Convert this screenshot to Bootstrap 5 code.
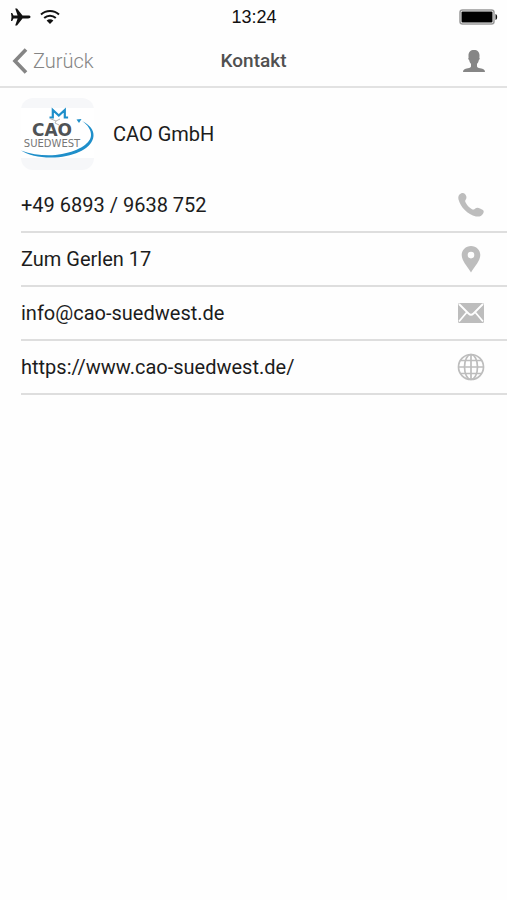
<!DOCTYPE html>
<html lang="de">
<head>
<meta charset="utf-8">
<meta name="viewport" content="width=device-width, initial-scale=1">
<title>Kontakt</title>
<link href="https://cdn.jsdelivr.net/npm/bootstrap@5.3.0/dist/css/bootstrap.min.css" rel="stylesheet">
<style>
body { background: #fefefe; color: #1c1c1c; font-family: Roboto, "Liberation Sans", sans-serif; font-size: 20px; line-height: 24px; }
svg { display: block; flex: none; }
.status-bar { height: 34px; padding: 0 9px 0 10px; color: #111; font-family: "Liberation Sans", sans-serif; font-size: 18px; }
.title-bar { height: 54px; padding: 2px 12px 0; border-bottom: 2px solid #e2e2e2; }
.side { flex: 1 1 0; }
.back { color: #858585; font-weight: 300; gap: 5px; }
.title-bar h1 { font-size: 19px; font-weight: 500; color: #505050; }
.person { color: #868686; margin-right: 9px; }
.company { padding: 10px 21px 9px; gap: 19px; }
.contacts { padding-left: 21px; }
.contacts a { height: 54px; padding-right: 22px; border-bottom: 2px solid #dedede; color: #1c1c1c; }
.contacts svg { color: #bdbdbd; }
</style>
<script src="https://cdn.jsdelivr.net/npm/bootstrap@5.3.0/dist/js/bootstrap.bundle.min.js" defer></script>
</head>
<body>
<div class="status-bar d-flex align-items-center">
  <div class="side d-flex align-items-center gap-2">
    <svg width="22" height="20" viewBox="0 0 22 20" fill="currentColor" aria-hidden="true"><path d="M20.500 10c0-.9-.9-1.400-2.500-1.400h-5.500L7 1.500H5.200l2.400 7.100H3.500L2.200 6H1l.5 4-.5 4h1.200l1.300-2.600h4.100l-2.400 7.100H7l5.500-7.100H18c1.600 0 2.500-.5 2.500-1.400z"/></svg>
    <svg width="20" height="16" viewBox="0 0 20 16" fill="none" stroke="currentColor" stroke-width="2" aria-hidden="true"><path d="M1 5.500C6 .8 14 .8 19 5.500M4.200 9c3.300-3 8.300-3 11.600 0"/><path d="M6.600 11.500c2-1.700 4.800-1.700 6.800 0L10 15z" fill="currentColor" stroke="none"/></svg>
  </div>
  <div>13:24</div>
  <div class="side d-flex justify-content-end">
    <svg width="39" height="16" viewBox="0 0 39 16" aria-hidden="true"><rect x="1" y="1" width="34" height="14" rx="2.500" fill="#fff" stroke="#999" stroke-width="1.500"/><rect x="2.500" y="2.500" width="31" height="11" rx="1" fill="#000"/><path d="M36.500 5c2.200.5 2.200 5.500 0 6z" fill="#111"/></svg>
  </div>
</div>
<header class="title-bar d-flex align-items-center">
  <div class="side d-flex">
    <button type="button" class="back btn border-0 p-0 d-flex align-items-center fs-5">
      <svg width="16" height="26" viewBox="0 0 16 26" fill="none" stroke="currentColor" stroke-width="3.600" aria-hidden="true"><path d="M14 1.500L3 13l11 11.500"/></svg>
      <span>Zurück</span>
    </button>
  </div>
  <h1 class="m-0">Kontakt</h1>
  <div class="side d-flex justify-content-end">
    <button type="button" class="person btn border-0 p-0" aria-label="Profil">
      <svg width="24" height="24" viewBox="0 0 24 24" fill="currentColor" aria-hidden="true"><path d="M12 1c3.500 0 5.500 2 5.500 5.500 0 1 0 1.400-.2 2 .8.300.5 2.200-.5 2.700-.4 1.800-1 2.800-1.800 3.600v2.400c0 1.200 1 1.600 3.200 2.100C21.500 20 23 20.600 23 23H1c0-2.400 1.500-3 4.800-3.700 2.200-.5 3.200-.9 3.200-2.100v-2.400c-.8-.8-1.400-1.800-1.800-3.600-1-.5-1.300-2.400-.5-2.700-.2-.6-.2-1-.2-2C6.500 3 8.500 1 12 1z"/></svg>
    </button>
  </div>
</header>
<main>
  <section class="company d-flex align-items-center">
    <svg width="73" height="72" viewBox="0 0 73 72" role="img" aria-label="CAO Suedwest">
      <rect width="73" height="72" rx="12" fill="#f6f7f9"/>
      <path d="M0 10h73v50H0z" fill="#fff"/>
      <path d="M28.500 19.500h3.300V12l6 5.500 6-5.500v7.500h3.300" fill="none" stroke="#1f8fca" stroke-width="2.200"/>
      <path d="M29 20.500l6 2.500 4-2M35 23l-1 2 4 2" fill="none" stroke="#b5b5b5"/>
      <path d="M55.500 21.500l5-.5-2.500 4z" fill="#1f8fca"/>
      <path d="M61 23c8 4 12 9 11.500 15C71.500 50 55 58 34 59.500 20 60.200 8 57.500 0 52.500c14 5 29 6 41 3.500 18-3.500 29-11 29-19 0-5-3-10-9-14z" fill="#1f8fca"/>
      <g font-family="DejaVu Sans, sans-serif" text-anchor="middle"><text x="31" y="38" font-size="17" font-weight="700" fill="#505356">CAO</text><text x="31" y="49" font-size="10" fill="#777">SUEDWEST</text></g>
    </svg>
    <div>CAO GmbH</div>
  </section>
  <nav class="contacts" aria-label="Kontaktdaten">
    <a class="d-flex align-items-center justify-content-between text-decoration-none" href="tel:+4968939638752">+49 6893 / 9638 752
      <svg width="28" height="28" viewBox="0 0 28 28" fill="currentColor" aria-hidden="true"><path d="M2.500 3.500C4 1.800 6.500 1.300 8 3c1.600 1.800 2 4 .8 5.400-.8 1-.8 1.800-.3 2.800 1.400 3 3.500 5.300 6.500 7 1 .6 1.800.5 2.700-.3 1.600-1.400 3.300-1.400 5.300-.5l2.500 1.300c1.600.9 1.500 2.500.5 4-1.500 2.400-4 3.400-7 2.700C10.500 23.500 3.500 16 1.500 8.500c-.5-2-.2-3.700 1-5z"/></svg>
    </a>
    <a class="d-flex align-items-center justify-content-between text-decoration-none" href="#karte">Zum Gerlen 17
      <svg width="28" height="28" viewBox="0 0 28 28" fill="currentColor" aria-hidden="true"><path fill-rule="evenodd" d="M14 1c5.300 0 9.300 4 9.300 9 0 5.500-5.300 11-9.300 17.500C10 21 4.700 15.500 4.700 10c0-5 4-9 9.300-9zm0 5.800a3.300 3.300 0 100 6.600 3.300 3.300 0 000-6.600z"/></svg>
    </a>
    <a class="d-flex align-items-center justify-content-between text-decoration-none" href="mailto:info@cao-suedwest.de">info@cao-suedwest.de
      <svg width="28" height="28" viewBox="0 0 28 28" aria-hidden="true"><rect x="1" y="4" width="26" height="20" rx="1.500" fill="currentColor"/><path d="M2 5l9.500 9.500c1.500 1.500 3.500 1.500 5 0L26 5M2 22.500l8-9.500M26 22.500L18 13" fill="none" stroke="#fff" stroke-width="1.800"/></svg>
    </a>
    <a class="d-flex align-items-center justify-content-between text-decoration-none" href="https://www.cao-suedwest.de/">https://www.cao-suedwest.de/
      <svg width="28" height="28" viewBox="0 0 28 28" fill="none" stroke="currentColor" stroke-width="1.700" aria-hidden="true"><circle cx="14" cy="14" r="12.500"/><ellipse cx="14" cy="14" rx="6.500" ry="12.500"/><path d="M14 1.500v25M1.500 14h25M3.500 7.500h21M3.500 20.500h21"/></svg>
    </a>
  </nav>
</main>
</body>
</html>
